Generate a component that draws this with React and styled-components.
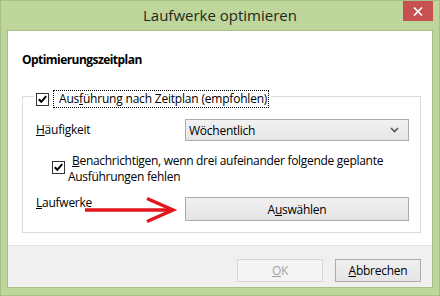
import React from "react";
import styled, { createGlobalStyle } from "styled-components";

const Global = createGlobalStyle`
  html, body { margin: 0; padding: 0; background: #bed59b; }
  body { font-family: "Open Sans", "Noto Sans", sans-serif; font-size: 12px; color: #000; }
  * { box-sizing: border-box; }
`;

const Window = styled.div`
  width: 440px;
  height: 296px;
  border: 1px solid #a6bf84;
  background: #bed59b;
  display: flex;
  flex-direction: column;
`;

const TitleBar = styled.div`
  height: 29px;
  flex: none;
  display: grid;
  grid-template-columns: 1fr auto 1fr;
  align-items: start;
`;

const Title = styled.div`
  grid-column: 2;
  font-size: 15px;
  line-height: 29px;
  color: #1e2a1a;
`;

const CloseButton = styled.div`
  grid-column: 3;
  justify-self: end;
  width: 30px;
  height: 20px;
  margin-right: 6px;
  background: #c75050;
  display: flex;
  align-items: center;
  justify-content: center;
`;

const Client = styled.div`
  flex: 1;
  margin: 0 6px 7px 6px;
  border: 1px solid #a7bf87;
  display: flex;
  flex-direction: column;
  background: #fff;
`;

const Content = styled.div`
  flex: 1;
  padding: 21px 11px 0 14px;
`;

const Heading = styled.div`
  font-weight: 700;
  line-height: 16px;
  letter-spacing: -0.55px;
`;

const Group = styled.fieldset`
  margin: 22px 0 0 0;
  width: 399px;
  border: 1px solid #dcdcdc;
  padding: 17px 10px 11px 13px;
  min-width: 0;
`;

const Legend = styled.legend`
  height: 12px;
  margin-left: -2px;
  padding: 0 2px;
  display: flex;
  align-items: flex-start;
  gap: 4px;
`;

const FocusLabel = styled.span`
  height: 18px;
  line-height: 16px;
  border: 1px dotted #000;
  padding: 0 1px 0 5px;
  white-space: nowrap;
  letter-spacing: -0.2px;
`;

const Box = styled.span`
  flex: none;
  width: 13px;
  height: 13px;
  border: 1px solid #333;
  background: #fff;
  display: flex;
  align-items: center;
  justify-content: center;
  margin-top: ${(p) => p.$top || 0}px;
`;

const Key = styled.span`
  text-decoration: underline;
  text-underline-offset: 1px;
`;

const FormRow = styled.div`
  position: relative;
  display: grid;
  grid-template-columns: 149px 224px;
  align-items: ${(p) => p.$align || "center"};
  margin-top: ${(p) => p.$mt || 0}px;
`;

const Label = styled.div`
  line-height: 16px;
  letter-spacing: -0.25px;
`;

const Combo = styled.div`
  height: 22px;
  border: 1px solid #acacac;
  background: linear-gradient(#f2f2f2, #e5e5e5);
  padding: 0 9px 0 3px;
  display: flex;
  align-items: center;
  justify-content: space-between;
  letter-spacing: -0.25px;
`;

const CheckRow = styled.div`
  display: flex;
  padding-left: 16px;
  margin-top: ${(p) => p.$mt || 0}px;
`;

const CheckText = styled.div`
  margin-left: 3px;
  line-height: 16px;
  text-indent: 4px;
  letter-spacing: -0.3px;
`;

const Button = styled.div`
  width: ${(p) => p.$w || 86}px;
  height: ${(p) => p.$h || 23}px;
  margin-top: ${(p) => p.$mt || 0}px;
  border: 1px solid ${(p) => (p.$disabled ? "#d6d6d6" : "#acacac")};
  background: ${(p) =>
    p.$disabled ? "#f4f4f4" : "linear-gradient(#f0f0f0, #e5e5e5)"};
  color: ${(p) => (p.$disabled ? "#a3a3a3" : "#000")};
  display: flex;
  align-items: center;
  justify-content: center;
  letter-spacing: -0.25px;
`;

const Arrow = styled.svg`
  position: absolute;
  left: 48px;
  top: 1px;
`;

const Footer = styled.div`
  flex: none;
  height: 42px;
  border-top: 1px solid #dfdfdf;
  background: #f0f0f0;
  display: flex;
  justify-content: flex-end;
  align-items: flex-start;
  gap: 12px;
  padding: 13px 11px 0 0;
`;

const Check = () => (
  <svg width="11" height="11" viewBox="0 0 11 11">
    <path d="M1.8 5.2 L4.3 7.8 L9.2 2.2" fill="none" stroke="#000" strokeWidth="2" />
  </svg>
);

export default function App() {
  return (
    <>
      <Global />
      <Window>
        <TitleBar>
          <Title>Laufwerke optimieren</Title>
          <CloseButton>
            <svg width="10" height="9" viewBox="0 0 10 9">
              <path d="M1 0.5 L9 8.5 M9 0.5 L1 8.5" stroke="#fff" strokeWidth="1.7" />
            </svg>
          </CloseButton>
        </TitleBar>
        <Client>
          <Content>
            <Heading>Optimierungszeitplan</Heading>
            <Group>
              <Legend>
                <Box $top={3}>
                  <Check />
                </Box>
                <FocusLabel>
                  Aus<Key>f</Key>ührung nach Zeitplan (empfohlen)
                </FocusLabel>
              </Legend>
              <FormRow>
                <Label>
                  <Key>H</Key>äufigkeit
                </Label>
                <Combo>
                  <span>Wöchentlich</span>
                  <svg width="9" height="6" viewBox="0 0 9 6">
                    <path d="M1 1 L4.5 4.5 L8 1" fill="none" stroke="#555" strokeWidth="1.6" />
                  </svg>
                </Combo>
              </FormRow>
              <CheckRow $mt={12}>
                <Box $top={8}>
                  <Check />
                </Box>
                <CheckText>
                  <Key>B</Key>enachrichtigen, wenn drei aufeinander folgende geplante
                  <br />
                  Ausführungen fehlen
                </CheckText>
              </CheckRow>
              <FormRow $mt={10} $align="start">
                <Label>
                  <Key>L</Key>aufwerke
                </Label>
                <Button $w={224} $h={24} $mt={2}>
                  <span>
                    A<Key>u</Key>swählen
                  </span>
                </Button>
                <Arrow width="94" height="28" viewBox="0 0 94 28">
                  <path d="M1 14 L88 14" stroke="#e3151b" strokeWidth="3.5" fill="none" />
                  <path d="M63 2.5 L89 14 L63 25.5" stroke="#e3151b" strokeWidth="3.5" fill="none" strokeLinejoin="miter" />
                </Arrow>
              </FormRow>
            </Group>
          </Content>
          <Footer>
            <Button $disabled>
              <span>
                <Key>O</Key>K
              </span>
            </Button>
            <Button>
              <span>
                <Key>A</Key>bbrechen
              </span>
            </Button>
          </Footer>
        </Client>
      </Window>
    </>
  );
}
